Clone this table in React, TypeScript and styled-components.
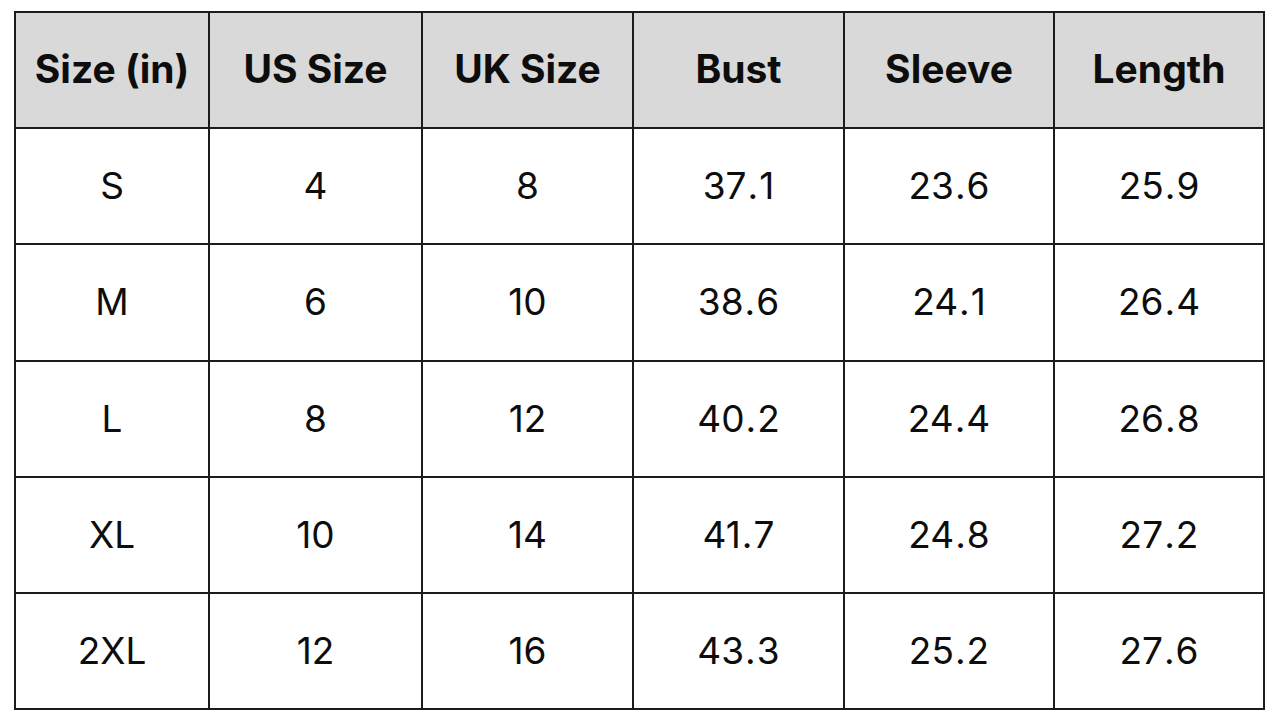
import styled, { createGlobalStyle } from "styled-components";

const GlobalStyle = createGlobalStyle`
  html, body {
    margin: 0;
    padding: 0;
    background: #ffffff;
  }
  body {
    font-family: Inter, "Liberation Sans", sans-serif;
    color: #111111;
  }
`;

const Page = styled.div`
  padding: 11px 0 0 14px;
`;

const Grid = styled.div`
  display: grid;
  grid-template-columns: 192px 211px 209px 209px 208px 208px;
  grid-template-rows: 114px 114px 115px 114px 114px 114px;
  gap: 2px;
  padding: 2px;
  width: max-content;
  background: #1c1c1c;
`;

const Cell = styled.div<{ $head?: boolean }>`
  display: flex;
  align-items: center;
  justify-content: center;
  background: ${(p) => (p.$head ? "#d9d9d9" : "#ffffff")};
  font-size: ${(p) => (p.$head ? "39px" : "37px")};
  font-weight: ${(p) => (p.$head ? 700 : 400)};
  color: #0d0d0d;
  padding-bottom: ${(p) => (p.$head ? "4px" : "2px")};
  box-sizing: border-box;
`;

// the decimal point sits loose in the source image
const Dot = styled.span`
  margin: 0 1px;
`;

const headers = ["Size (in)", "US Size", "UK Size", "Bust", "Sleeve", "Length"];

const rows = [
  ["S", "4", "8", "37.1", "23.6", "25.9"],
  ["M", "6", "10", "38.6", "24.1", "26.4"],
  ["L", "8", "12", "40.2", "24.4", "26.8"],
  ["XL", "10", "14", "41.7", "24.8", "27.2"],
  ["2XL", "12", "16", "43.3", "25.2", "27.6"],
];

function Value({ v }: { v: string }) {
  const [a, b] = v.split(".");
  if (b === undefined) return <>{v}</>;
  return (
    <>
      {a}
      <Dot>.</Dot>
      {b}
    </>
  );
}

export default function App() {
  return (
    <>
      <GlobalStyle />
      <Page>
        <Grid>
          {headers.map((h) => (
            <Cell key={h} $head>
              {h}
            </Cell>
          ))}
          {rows.map((r) =>
            r.map((v, i) => (
              <Cell key={r[0] + i}>
                <Value v={v} />
              </Cell>
            ))
          )}
        </Grid>
      </Page>
    </>
  );
}
